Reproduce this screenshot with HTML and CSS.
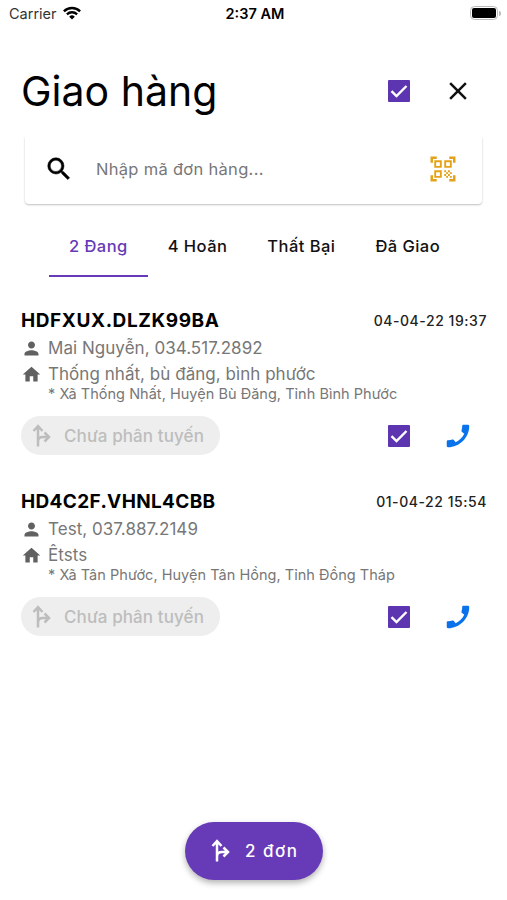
FILE: index.html
```
<!DOCTYPE html>
<html lang="vi">
<head>
  <meta charset="UTF-8">
  <title>Giao hàng</title>
  <link rel="stylesheet" href="styles.css">
</head>
<body>
  <!-- Shared icons -->
  <svg class="sprite" width="0" height="0">
    <symbol id="icon-route" viewBox="0 0 24 24">
      <path d="M8 22.500V3M3.500 7L8 2.200L12.500 7M8 17.500c0-3 2-4.500 5-4.500h5.500M14.500 8.500L19 13l-4.500 4.500" fill="none" stroke="currentColor" stroke-width="2.500"/>
    </symbol>
    <symbol id="icon-person" viewBox="0 0 24 24">
      <path d="M12 12c2.210 0 4-1.790 4-4s-1.790-4-4-4-4 1.790-4 4 1.790 4 4 4zm0 2c-2.670 0-8 1.340-8 4v2h16v-2c0-2.660-5.330-4-8-4z" fill="currentColor"/>
    </symbol>
    <symbol id="icon-home" viewBox="0 0 24 24">
      <path d="M10 20v-6h4v6h5v-8h3L12 3 2 12h3v8z" fill="currentColor"/>
    </symbol>
    <symbol id="icon-call" viewBox="0 0 24 24">
      <path transform="translate(24 0) scale(-1 1)" d="M20.010 15.380c-1.230 0-2.420-.2-3.530-.56a.977.977 0 0 0-1.010.24l-1.570 1.970c-2.830-1.350-5.480-3.900-6.890-6.830l1.950-1.660c.27-.28.35-.67.24-1.020-.37-1.110-.56-2.300-.56-3.530 0-.54-.45-.99-.99-.99H4.190C3.650 3 3 3.240 3 3.990 3 13.280 10.730 21 20.010 21c.71 0 .99-.63.99-1.180v-3.450c0-.54-.45-.99-.99-.99z" fill="currentColor"/>
    </symbol>
    <symbol id="icon-check" viewBox="0 0 22 22">
      <path d="M3.500 11.200l5 4.800L18.500 6" fill="none" stroke="currentColor" stroke-width="2.400"/>
    </symbol>
  </svg>

  <div class="screen">
    <div class="status-bar">
      <div class="status-left">
        <span class="carrier">Carrier</span>
        <svg class="wifi" viewBox="0 0 18 14" fill="none" stroke="currentColor" stroke-width="2.400">
          <path d="M.9 5.300a11.500 11.500 0 0 1 16.200 0M3.900 8.400a7.200 7.200 0 0 1 10.200 0"/>
          <path d="M9 13.500L6.200 10.700a4 4 0 0 1 5.600 0z" fill="currentColor" stroke="none"/>
        </svg>
      </div>
      <span class="clock">2:37 AM</span>
      <div class="status-right">
        <div class="battery"><div class="battery-level"></div></div>
        <div class="battery-cap"></div>
      </div>
    </div>

    <header class="header">
      <h1 class="title">Giao hàng</h1>
      <div class="actions">
        <button class="checkbox"><svg><use href="#icon-check"/></svg></button>
        <button class="icon-button">
          <svg viewBox="0 0 24 24"><path d="M19 6.410L17.590 5 12 10.590 6.410 5 5 6.410 10.590 12 5 17.590 6.410 19 12 13.410 17.590 19 19 17.590 13.410 12z" fill="currentColor"/></svg>
        </button>
      </div>
    </header>

    <div class="search">
      <svg class="search-icon" viewBox="0 0 24 24"><path d="M15.500 14h-.79l-.28-.27A6.471 6.471 0 0 0 16 9.500 6.500 6.500 0 1 0 9.500 16c1.610 0 3.090-.59 4.230-1.570l.27.28v.79l5 4.990L20.490 19l-4.990-5zm-6 0C7.010 14 5 11.990 5 9.500S7.010 5 9.500 5 14 7.010 14 9.500 11.990 14 9.500 14z" fill="currentColor" stroke="currentColor" stroke-width="0.4"/></svg>
      <span class="search-placeholder">Nhập mã đơn hàng...</span>
      <svg class="scan-icon" viewBox="0 0 24 24"><path d="M9.500 6.500v3h-3v-3h3M11 5H5v6h6V5zm-1.500 9.500v3h-3v-3h3M11 13H5v6h6v-6zm6.500-6.500v3h-3v-3h3M19 5h-6v6h6V5zm-6 8h1.500v1.500H13V13zm1.500 1.500H16V16h-1.500v-1.500zM16 13h1.500v1.500H16V13zm-3 3h1.500v1.500H13V16zm1.500 1.500H16V19h-1.500v-1.500zM16 16h1.500v1.500H16V16zm1.500-1.500H19V16h-1.500v-1.500zm0 3H19V19h-1.500v-1.500zM22 7h-2V4h-3V2h5v5zm0 15v-5h-2v3h-3v2h5zM2 22h5v-2H4v-3H2v5zM2 2v5h2V4h3V2H2z" fill="currentColor"/></svg>
    </div>

    <nav class="tabs">
      <a class="tab active">2 Đang</a>
      <a class="tab">4 Hoãn</a>
      <a class="tab">Thất Bại</a>
      <a class="tab">Đã Giao</a>
    </nav>

    <main class="orders">
      <article class="order">
        <div class="order-head">
          <span class="order-code">HDFXUX.DLZK99BA</span>
          <span class="order-time">04-04-22 19:37</span>
        </div>
        <div class="order-line">
          <svg><use href="#icon-person"/></svg>
          <span>Mai Nguyễn, 034.517.2892</span>
        </div>
        <div class="order-line">
          <svg><use href="#icon-home"/></svg>
          <span>Thống nhất, bù đăng, bình phước</span>
        </div>
        <div class="order-area">* Xã Thống Nhất, Huyện Bù Đăng, Tỉnh Bình Phước</div>
        <div class="order-foot">
          <button class="chip"><svg><use href="#icon-route"/></svg><span>Chưa phân tuyến</span></button>
          <div class="actions">
            <button class="checkbox"><svg><use href="#icon-check"/></svg></button>
            <button class="icon-button call"><svg><use href="#icon-call"/></svg></button>
          </div>
        </div>
      </article>

      <article class="order">
        <div class="order-head">
          <span class="order-code tight">HD4C2F.VHNL4CBB</span>
          <span class="order-time">01-04-22 15:54</span>
        </div>
        <div class="order-line">
          <svg><use href="#icon-person"/></svg>
          <span>Test, 037.887.2149</span>
        </div>
        <div class="order-line">
          <svg><use href="#icon-home"/></svg>
          <span>Êtsts</span>
        </div>
        <div class="order-area">* Xã Tân Phước, Huyện Tân Hồng, Tỉnh Đồng Tháp</div>
        <div class="order-foot">
          <button class="chip"><svg><use href="#icon-route"/></svg><span>Chưa phân tuyến</span></button>
          <div class="actions">
            <button class="checkbox"><svg><use href="#icon-check"/></svg></button>
            <button class="icon-button call"><svg><use href="#icon-call"/></svg></button>
          </div>
        </div>
      </article>
    </main>

    <button class="fab"><svg><use href="#icon-route"/></svg><span>2 đơn</span></button>
  </div>
</body>
</html>
```
FILE: styles.css
```
* {
  box-sizing: border-box;
}

body {
  margin: 0;
  background: #fff;
  color: #111;
  font-family: Inter, 'Liberation Sans', sans-serif;
  overflow: hidden;
}

button {
  border: 0;
  padding: 0;
  background: none;
  color: inherit;
  font: inherit;
}

svg {
  display: block;
  flex: none;
}

.sprite {
  position: absolute;
}

.screen {
  width: 507px;
  height: 900px;
  display: flex;
  flex-direction: column;
  white-space: nowrap;
}

/* Status bar */
.status-bar {
  height: 26px;
  padding: 0 6px 0 9px;
  display: grid;
  grid-template-columns: 1fr auto 1fr;
  align-items: center;
}

.status-left,
.status-right {
  display: flex;
  align-items: center;
}

.status-left {
  gap: 6px;
}

.status-right {
  justify-content: flex-end;
  gap: 1px;
}

.carrier {
  font-size: 14.5px;
  color: #333;
}

.wifi {
  width: 18px;
  height: 14px;
  color: #000;
}

.clock {
  font-size: 14.5px;
  font-weight: 600;
  color: #000;
}

.battery {
  width: 28px;
  height: 14px;
  padding: 1px;
  border: 1.5px solid #bbb;
  border-radius: 4.5px;
}

.battery-level {
  height: 100%;
  border-radius: 2px;
  background: #000;
}

.battery-cap {
  width: 2px;
  height: 5px;
  border-radius: 0 2px 2px 0;
  background: #bbb;
}

/* Page header */
.header {
  height: 111px;
  padding: 19px 34px 0 21px;
  display: flex;
  justify-content: space-between;
  align-items: center;
}

.title {
  margin: 0;
  font-size: 41px;
  font-weight: 400;
  line-height: 48px;
  color: #000;
}

.actions {
  display: flex;
  align-items: center;
  gap: 33px;
}

.checkbox {
  width: 22px;
  height: 22px;
  border-radius: 1px;
  background: #5e35b1;
  color: #fff;
}

.checkbox svg {
  width: 22px;
  height: 22px;
}

.icon-button,
.icon-button svg {
  width: 30px;
  height: 30px;
}

.call {
  color: #0a73eb;
}

/* Search */
.search {
  height: 67px;
  margin: 0 25px;
  padding: 0 24px 3px 19px;
  display: flex;
  align-items: center;
  border-radius: 0 0 4px 4px;
  box-shadow: 0 1px 2px rgba(0, 0, 0, 0.25);
  clip-path: inset(0 -4px -5px -4px);
}

.search-icon {
  width: 30px;
  height: 30px;
  color: #000;
}

.search-placeholder {
  flex: 1;
  margin-left: 22px;
  font-size: 16.5px;
  letter-spacing: 0.3px;
  color: #777;
}

.scan-icon {
  width: 30px;
  height: 30px;
  color: #e3a21a;
}

/* Tabs */
.tabs {
  height: 60px;
  margin: 13px 0 0 49px;
  display: flex;
}

.tab {
  padding: 0 20px;
  font-size: 16.5px;
  font-weight: 500;
  line-height: 58px;
  letter-spacing: 0.45px;
}

.tab.active {
  color: #673ab7;
  border-bottom: 2px solid #673ab7;
}

/* Orders */
.orders {
  flex: 1;
  padding: 30px 20px 0 21px;
}

.order {
  height: 181px;
}

.order-head {
  height: 27px;
  padding-bottom: 1px;
  display: flex;
  justify-content: space-between;
  align-items: center;
}

.order-code {
  font-size: 19px;
  font-weight: 700;
  letter-spacing: 0.6px;
  color: #000;
}

.order-code.tight {
  letter-spacing: 0.35px;
}

.order-time {
  font-size: 14px;
  font-weight: 500;
  letter-spacing: 0.55px;
  color: #222;
}

.order-line {
  height: 26px;
  padding-top: 2px;
  display: flex;
  align-items: center;
  gap: 6px;
  font-size: 17px;
  letter-spacing: 0.04px;
  color: #777;
}

.order-line svg {
  width: 21px;
  height: 21px;
  color: #616161;
}

.order-area {
  padding-left: 27px;
  font-size: 14.5px;
  line-height: 15px;
  letter-spacing: 0.03px;
  color: #777;
}

.order-foot {
  margin-top: 15px;
  padding-right: 14px;
  display: flex;
  justify-content: space-between;
  align-items: center;
}

.chip {
  width: 199px;
  height: 39px;
  padding-left: 9px;
  display: flex;
  align-items: center;
  gap: 10px;
  border-radius: 20px;
  background: #eee;
  color: #bdbdbd;
  font-size: 17px;
  font-weight: 500;
  letter-spacing: 0.1px;
}

.chip svg,
.fab svg {
  width: 24px;
  height: 24px;
}

/* Floating action */
.fab {
  width: 138px;
  height: 58px;
  margin: 0 0 20px 185px;
  padding-left: 24px;
  display: flex;
  align-items: center;
  gap: 12px;
  border-radius: 29px;
  background: #673ab7;
  box-shadow: 0 3px 6px rgba(0, 0, 0, 0.3);
  color: #fff;
  font-size: 17px;
  font-weight: 500;
  letter-spacing: 1.5px;
}
```
